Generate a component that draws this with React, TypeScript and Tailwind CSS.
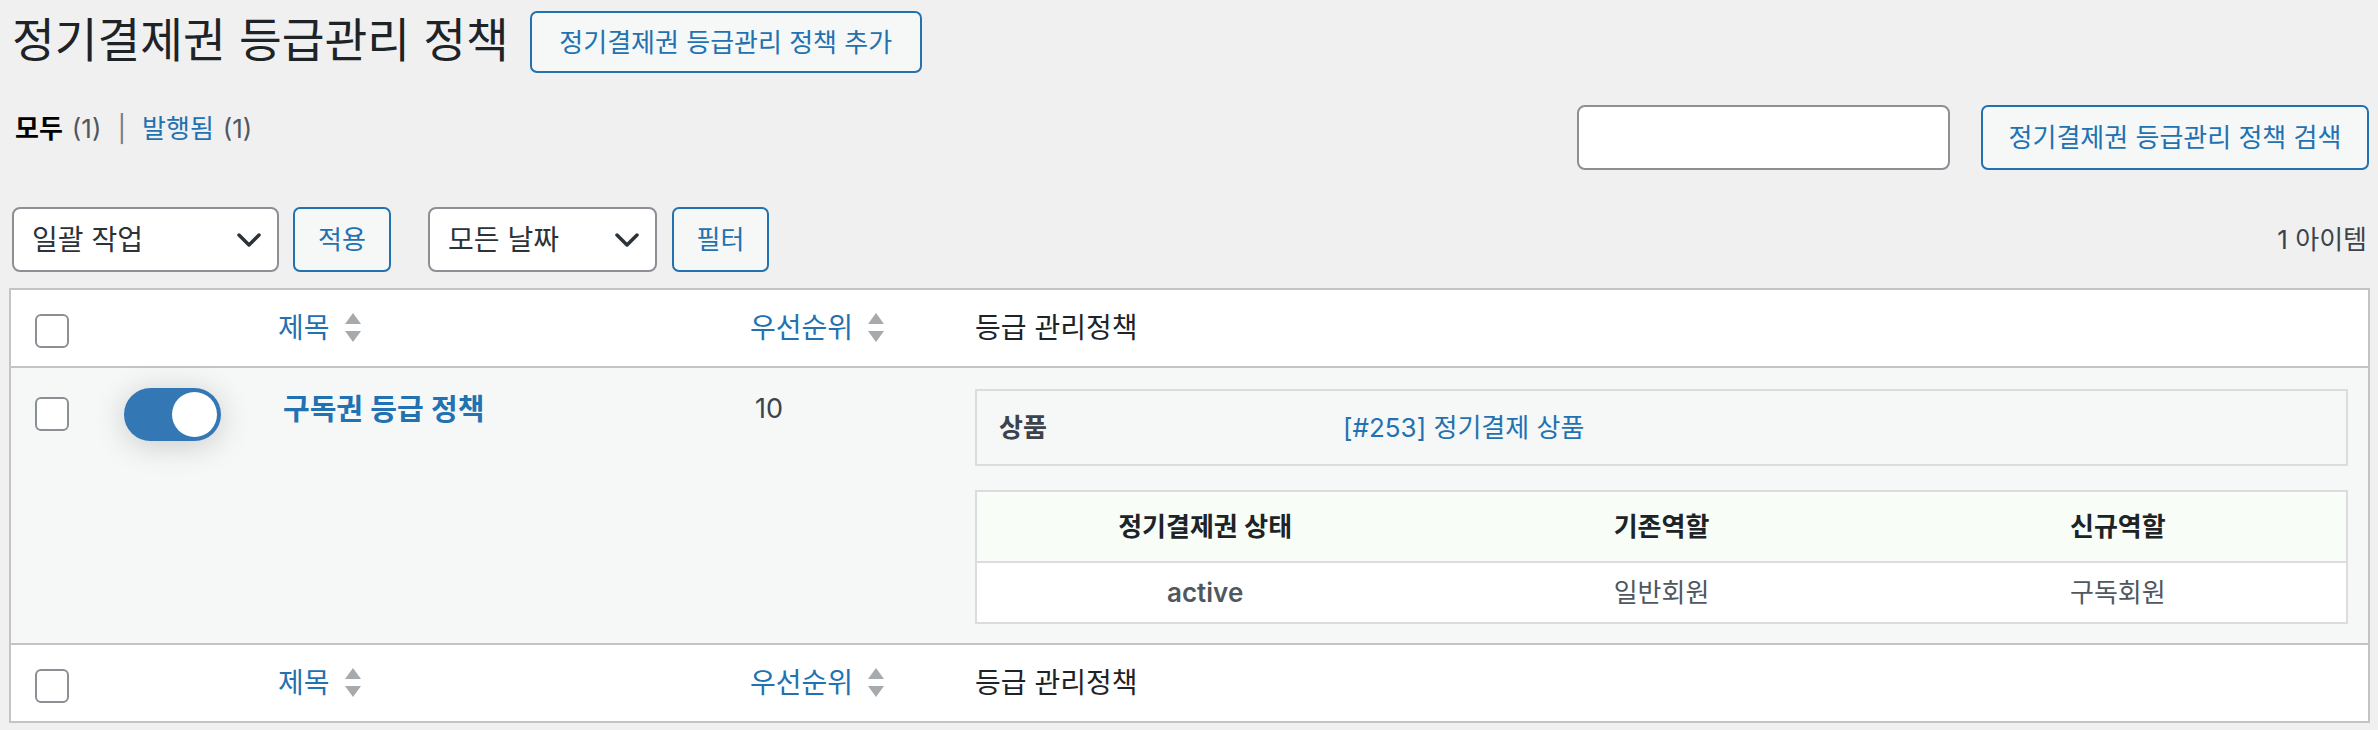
import React from "react"

const ko = "tracking-normal"

function Checkbox({ className = "" }: { className?: string }) {
  return <div className={`h-[34px] w-[34px] rounded-[6px] border-2 border-[#8c8f94] bg-white ${className}`} />
}

function SortIcon() {
  return (
    <svg width="18" height="30" viewBox="0 0 18 30" className="ml-[14px] shrink-0">
      <path d="M9 0 L17 11 L1 11 Z" fill="#a7aaad" />
      <path d="M1 18 L17 18 L9 29 Z" fill="#a7aaad" />
    </svg>
  )
}

function Chevron() {
  return (
    <svg width="24" height="14" viewBox="0 0 24 14" className="shrink-0">
      <path d="M2 2 L12 12 L22 2" fill="none" stroke="#2c3338" strokeWidth="3.5" strokeLinecap="round" strokeLinejoin="round" />
    </svg>
  )
}

function Select({ label, width }: { label: string; width: string }) {
  return (
    <div className={`flex h-[65px] ${width} items-center justify-between rounded-[8px] border-2 border-[#8c8f94] bg-white pl-[18px] pr-[16px] text-[28px] text-[#2c3338]`}>
      <span className={ko}>{label}</span>
      <Chevron />
    </div>
  )
}

function SecondaryButton({ label, width, size = "h-[65px]" }: { label: string; width: string; size?: string }) {
  return (
    <button className={`${size} ${width} rounded-[7px] border-2 border-[#2271b1] bg-[#f6f7f7] text-[26px] text-[#2271b1] ${ko}`}>
      {label}
    </button>
  )
}

function HeaderRow({ top }: { top?: boolean }) {
  return (
    <div
      className={`grid h-[78px] grid-cols-[91px_160px_472px_225px_1fr] items-center text-[28px] ${
        top ? "border-b-2" : "border-t-2"
      } border-[#c3c4c7]`}
    >
      <div className="pl-[24px] pt-[6px]">
        <Checkbox />
      </div>
      <div />
      <div className="flex items-center pl-[16px] text-[#2271b1]">
        <span className={ko}>제목</span>
        <SortIcon />
      </div>
      <div className="flex items-center pl-[16px] text-[#2271b1]">
        <span className={ko}>우선순위</span>
        <SortIcon />
      </div>
      <div className={`pl-[16px] text-[#1d2327] ${ko}`}>등급 관리정책</div>
    </div>
  )
}

const roles = [{ status: "active", from: "일반회원", to: "구독회원" }]

export default function App() {
  return (
    <div className="min-h-[730px] w-full bg-[#f0f0f1] pl-[9px] pr-[8px] pt-[11px] font-[family-name:Inter,'Noto_Sans_CJK_KR',sans-serif] text-[#3c434a]">
      {/* page title */}
      <div className="flex h-[62px] items-center gap-[21px] pl-[3px]">
        <h1 className="-mt-[4px] text-[46.5px] leading-[62px] font-normal text-[#1d2327]">
          정기결제권 등급관리 정책
        </h1>
        <SecondaryButton label="정기결제권 등급관리 정책 추가" width="w-[392px]" size="h-[62px]" />
      </div>

      {/* views + search */}
      <div className="mt-[32px] flex h-[65px] items-start justify-between">
        <div className="mt-[3px] flex h-[40px] items-center pl-[6px] text-[26px]">
          <span className={`font-semibold text-black ${ko}`}>모두</span>
          <span className="ml-[9px] text-[#50575e]">(1)</span>
          <span className="mx-[16px] text-[#787c82]">|</span>
          <a className={`text-[#2271b1] ${ko}`}>발행됨</a>
          <span className="ml-[9px] text-[#50575e]">(1)</span>
        </div>
        <div className="flex gap-[31px] pr-[1px]">
          <input className="h-[65px] w-[373px] rounded-[8px] border-2 border-[#8c8f94] bg-white outline-none" />
          <SecondaryButton label="정기결제권 등급관리 정책 검색" width="w-[388px]" />
        </div>
      </div>

      {/* tablenav */}
      <div className="mt-[37px] flex h-[65px] items-center pl-[3px]">
        <Select label="일괄 작업" width="w-[267px]" />
        <div className="ml-[14px]">
          <SecondaryButton label="적용" width="w-[98px]" />
        </div>
        <div className="ml-[37px]">
          <Select label="모든 날짜" width="w-[229px]" />
        </div>
        <div className="ml-[15px]">
          <SecondaryButton label="필터" width="w-[97px]" />
        </div>
        <div className="ml-auto pr-[3px] text-[26px] text-[#3c434a]">
          1 <span className={ko}>아이템</span>
        </div>
      </div>

      {/* list table */}
      <div className="mt-[16px] border-2 border-[#c3c4c7] bg-white">
        <HeaderRow top />

        <div className="grid grid-cols-[91px_160px_472px_225px_1fr] items-start bg-[#f6f7f7]">
          <div className="pl-[24px] pt-[29px]">
            <Checkbox />
          </div>
          <div className="pl-[22px] pt-[20px]">
            <div className="flex h-[53px] w-[97px] items-center justify-end rounded-full bg-[#3477b5] pr-[4px] shadow-[0_4px_32px_rgba(0,0,0,0.18)]">
              <div className="h-[45px] w-[45px] rounded-full bg-white" />
            </div>
          </div>
          <div className="pl-[21px] pt-[22px]">
            <a className={`text-[29px] leading-[40px] font-semibold text-[#2271b1] ${ko}`}>구독권 등급 정책</a>
          </div>
          <div className="pl-[21px] pt-[21px] text-[27px] leading-[40px] text-[#3c434a]">10</div>
          <div className="pb-[19px] pl-[16px] pr-[20px] pt-[21px]">
            <div className="flex h-[77px] items-center border-2 border-[#dcdcde] bg-[#f6f7f7] text-[26px]">
              <div className={`w-[366px] shrink-0 pl-[22px] font-semibold text-[#3c434a] ${ko}`}>상품</div>
              <a className="text-[#2271b1]">
                [#253] <span className={ko}>정기결제 상품</span>
              </a>
            </div>
            <div className="mt-[24px] border-2 border-[#dcdcde] text-[26px]">
              <div className="grid h-[71px] grid-cols-3 items-center border-b-2 border-[#dcdcde] bg-[#f8fdf7] text-center font-semibold text-[#1d2327]">
                <div className={ko}>정기결제권 상태</div>
                <div className={ko}>기존역할</div>
                <div className={ko}>신규역할</div>
              </div>
              {roles.map((r) => (
                <div key={r.status} className="grid h-[59px] grid-cols-3 items-center bg-white text-center text-[#50575e]">
                  <div className="font-semibold">{r.status}</div>
                  <div className={ko}>{r.from}</div>
                  <div className={ko}>{r.to}</div>
                </div>
              ))}
            </div>
          </div>
        </div>

        <HeaderRow />
      </div>
    </div>
  )
}
